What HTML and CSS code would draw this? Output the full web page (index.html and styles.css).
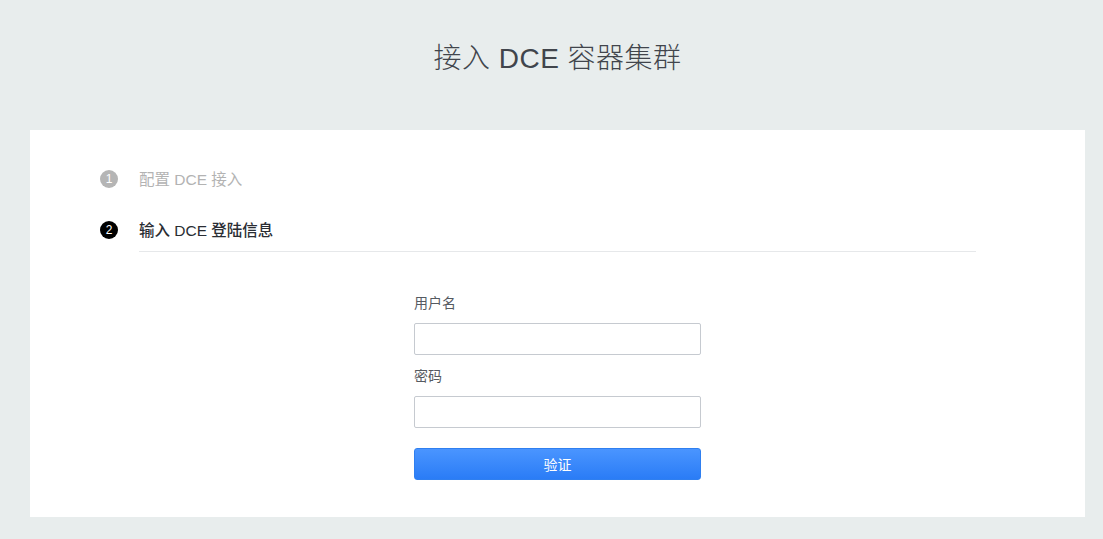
FILE: index.html
```html
<!DOCTYPE html>
<html lang="zh">
<head>
<meta charset="utf-8">
<link rel="stylesheet" href="styles.css">
</head>
<body>
<div class="page">
  <h1 class="title">接入 DCE 容器集群</h1>
  <div class="card">
    <div class="steps">
      <div class="step done">
        <span class="num">1</span>
        <span class="label">配置 DCE 接入</span>
      </div>
      <div class="step active">
        <span class="num">2</span>
        <span class="label">输入 DCE 登陆信息</span>
      </div>
      <div class="divider"></div>
    </div>
    <form class="form">
      <label class="field-label">用户名</label>
      <input class="input" type="text">
      <label class="field-label">密码</label>
      <input class="input" type="password">
      <button class="btn" type="button">验证</button>
    </form>
  </div>
</div>
</body>
</html>
```
FILE: styles.css
```css
html, body {
  margin: 0;
  padding: 0;
  background: #e8eded;
  font-family: "Liberation Sans", "Noto Sans CJK SC", sans-serif;
}
.page {
  padding: 0 18px 0 30px;
  height: 539px;
  box-sizing: border-box;
}
.title {
  margin: 0;
  height: 130px;
  box-sizing: border-box;
  padding-top: 39px;
  text-align: center;
  font-size: 28px;
  font-weight: 300;
  color: #41454c;
  line-height: 40px;
  letter-spacing: 0.5px;
}
.card {
  background: #fff;
  height: 387px;
  box-sizing: border-box;
  padding: 36px 109px 0 70px;
}
.steps {
  display: flex;
  flex-direction: column;
}
.step {
  display: flex;
  align-items: center;
  height: 26px;
  font-size: 15.5px;
}
.step + .step {
  margin-top: 25px;
}
.num {
  width: 18px;
  height: 18px;
  border-radius: 50%;
  color: #fff;
  font-family: "Liberation Sans", sans-serif;
  font-size: 12px;
  line-height: 18px;
  text-align: center;
  margin-right: 21px;
}
.label {
  margin-bottom: 3px;
}
.done .num { background: #b5b5b5; }
.done .label { color: #b3b3b3; }
.active .num { background: #000; }
.active .label { color: #2a2d33; font-weight: 500; }
.divider {
  margin: 8px 0 0 39px;
  height: 1px;
  background: #e6e8ea;
}
.form {
  width: 287px;
  margin: 41px 0 0 314px;
  display: flex;
  flex-direction: column;
}
.field-label {
  font-size: 14px;
  color: #555a61;
  line-height: 20px;
}
.input {
  margin: 10px 0 11px;
  height: 32px;
  box-sizing: border-box;
  border: 1px solid #c6cad0;
  border-radius: 2px;
  outline: none;
  padding: 0 8px;
}
.btn {
  margin-top: 9px;
  height: 32px;
  border: 1px solid #2f7ff0;
  border-radius: 3px;
  background: linear-gradient(#4a95ff, #2a7cf6);
  color: #fff;
  font-family: "Liberation Sans", "Noto Sans CJK SC", sans-serif;
  font-size: 14px;
  padding: 0;
}
```
